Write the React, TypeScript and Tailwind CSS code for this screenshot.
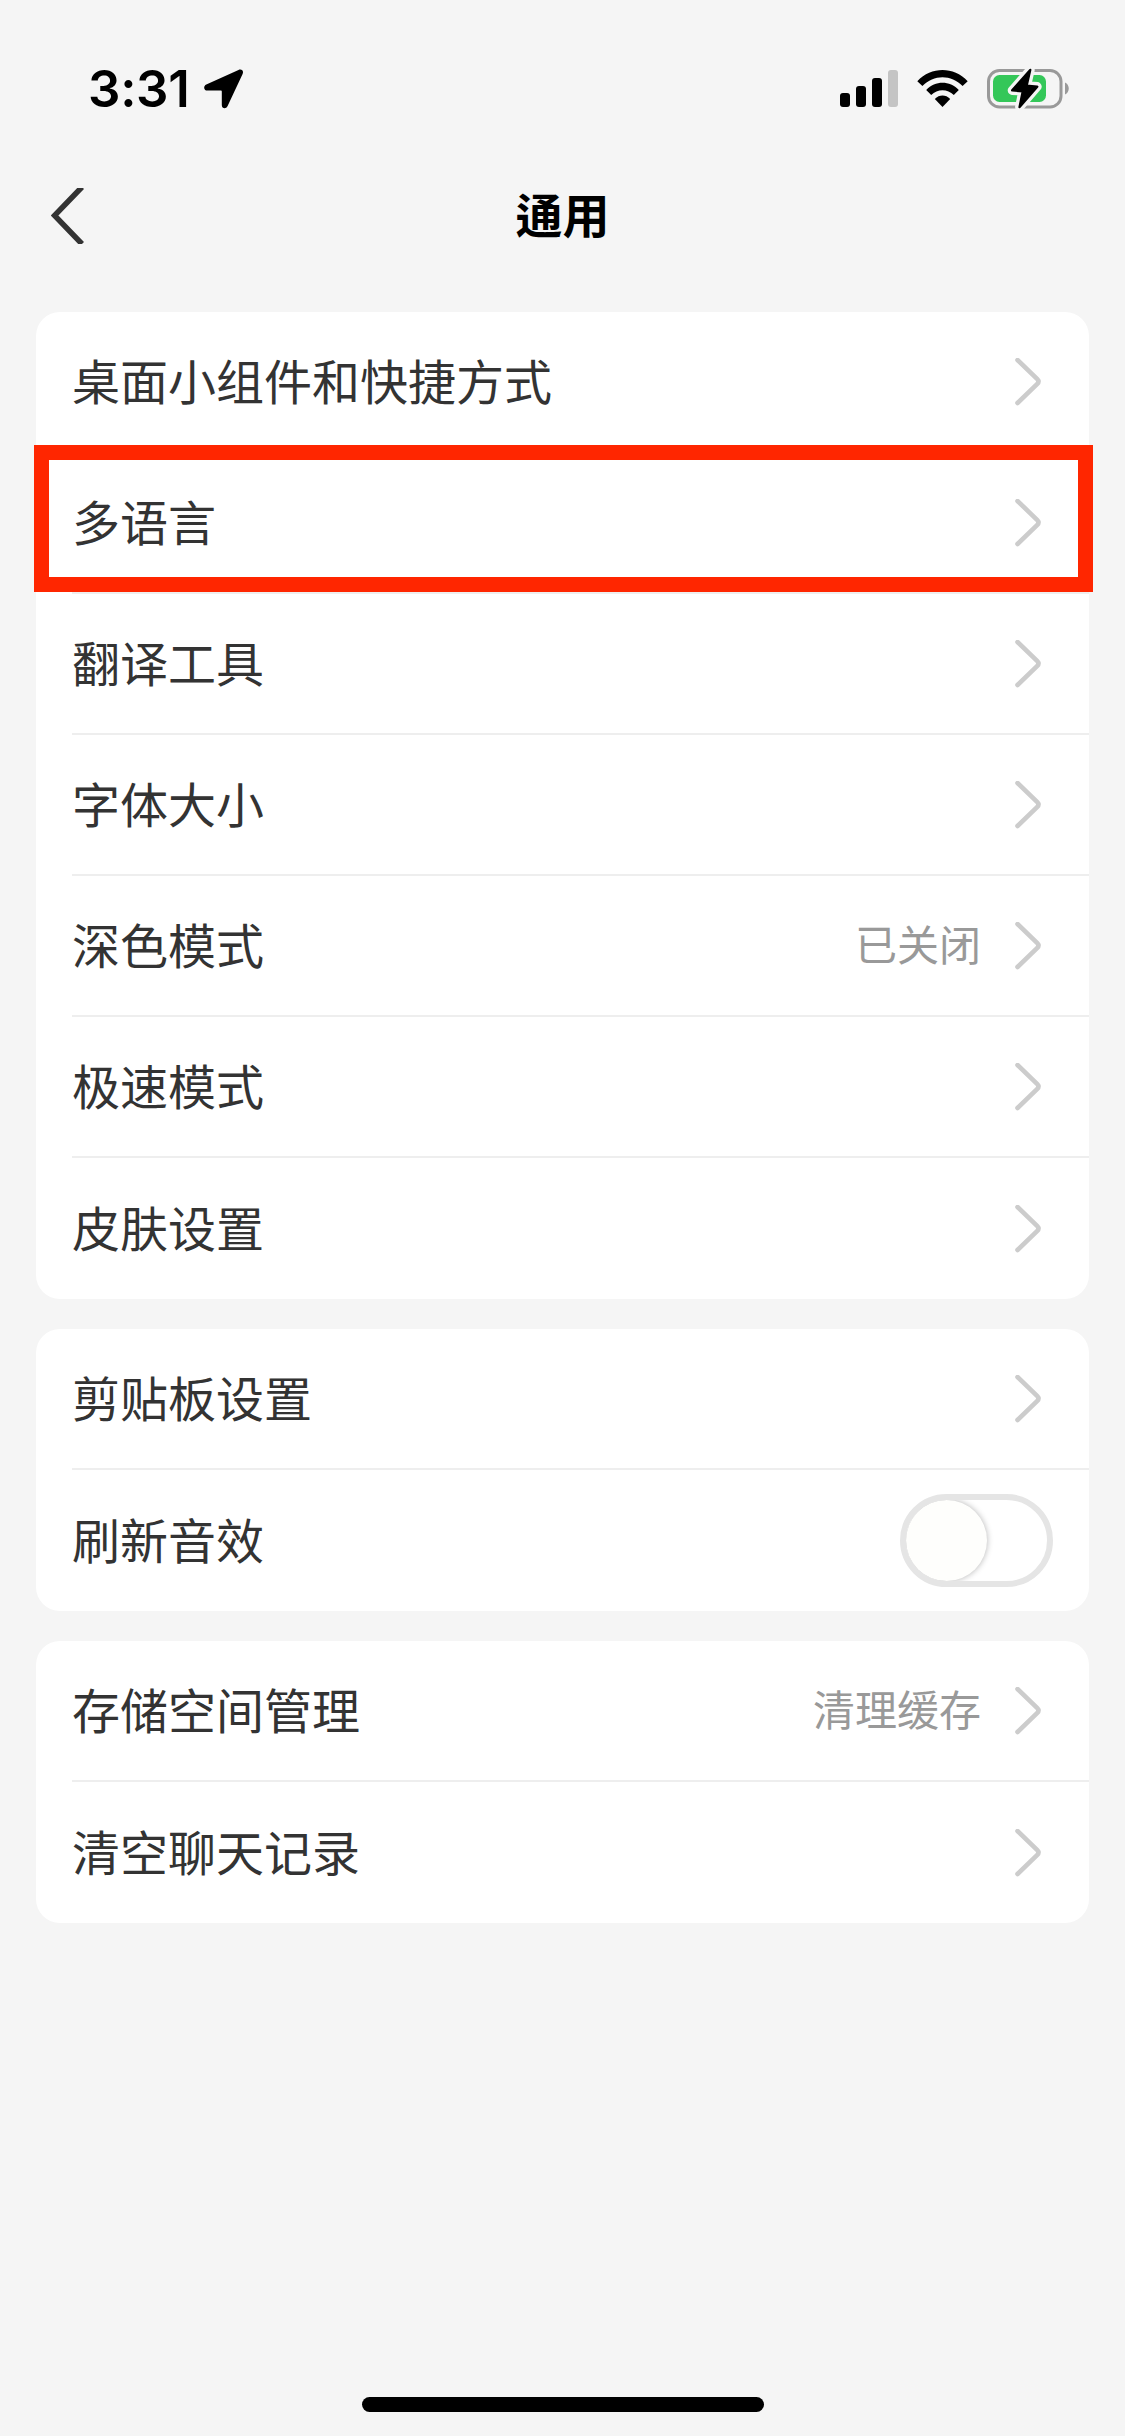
import type { ReactNode } from "react";

type Row = {
  label: string;
  value?: string;
  toggle?: boolean;
  highlighted?: boolean;
};

const groups: Row[][] = [
  [
    { label: "桌面小组件和快捷方式" },
    { label: "多语言", highlighted: true },
    { label: "翻译工具" },
    { label: "字体大小" },
    { label: "深色模式", value: "已关闭" },
    { label: "极速模式" },
    { label: "皮肤设置" },
  ],
  [{ label: "剪贴板设置" }, { label: "刷新音效", toggle: true }],
  [{ label: "存储空间管理", value: "清理缓存" }, { label: "清空聊天记录" }],
];

const LocationArrow = () => (
  <svg width="40" height="40" viewBox="0 0 40 40" className="ml-[17px]">
    <path
      d="M34.5 0.9 L2.3 15.6 C-1 17.2 -0.3 21.6 3.3 21.6 L17 21.6 Q17.8 21.6 17.8 22.4 L17.8 36 C17.8 39.8 22 40.4 23.6 37 L38.6 5 C40 1.8 37.6 -0.4 34.5 0.9 Z"
      fill="#000"
    />
  </svg>
);

const Signal = () => (
  <svg width="58" height="37" viewBox="0 0 58 37">
    <rect x="0" y="23" width="10" height="14" rx="3" />
    <rect x="16" y="16" width="10" height="21" rx="3" />
    <rect x="32" y="8" width="10" height="29" rx="3" />
    <rect x="48" y="0" width="10" height="37" rx="3" fill="#c4c4c4" />
  </svg>
);

const Wifi = () => (
  <svg width="51" height="37" viewBox="0 0 51 37">
    <path d="M0.3 11.2 C14.5 -3.7 36.5 -3.7 50.7 11.2 L45.6 16 C34.2 4.3 16.8 4.3 5.4 16 Z" />
    <path d="M9.2 20 C18.4 10.4 32.6 10.4 41.8 20 L36.8 25 C30.6 18.6 20.4 18.6 14.2 25 Z" />
    <path d="M17.8 29 C22.4 24.4 28.6 24.4 33.2 29 L25.5 37 Z" />
  </svg>
);

const bolt = "M43.2 4 L25.2 24.4 L35.8 25.2 L32.6 41 L50.2 20.6 L39.6 19.8 Z";

const Battery = () => (
  <svg width="83" height="44" viewBox="0 0 83 44">
    <rect x="1.5" y="4.5" width="72.5" height="36.5" rx="11" fill="none" stroke="#999" strokeWidth="3" />
    <rect x="6" y="9" width="53" height="27" rx="6.5" fill="#34c759" />
    <path d="M78 16.5 C83 18.5 83 26.5 78 28.5 Z" fill="#999" />
    <path d={bolt} stroke="#f5f5f5" strokeWidth="9" strokeLinejoin="round" />
    <path d={bolt} stroke="#000" strokeWidth="2.4" strokeLinejoin="round" />
  </svg>
);

const Chevron = () => (
  <svg width="26" height="48" viewBox="0 0 26 48" fill="none" className="mr-[48px]">
    <path
      d="M2.5 2 L22.3 21 Q24.6 23.5 22.3 26 L2.5 45"
      stroke="#ccc"
      strokeWidth="4.6"
      strokeLinecap="round"
    />
  </svg>
);

const Switch = () => (
  <div className="mr-9 h-[93px] w-[153px] overflow-hidden rounded-full border-[6px] border-[#e5e5e5] bg-white">
    <div className="size-[81px] rounded-full bg-[#fefefc] shadow-[0_0_6px_rgba(0,0,0,0.3)]" />
  </div>
);

const StatusBar = () => (
  <div className="flex h-[150px] items-start justify-between pr-[55px] pl-[88px]">
    <div className="flex items-center pt-[59px]">
      <span className="w-[99px] font-[Inter,sans-serif] text-[51px] leading-[60px] font-semibold tracking-[-0.3px]">
        3:31
      </span>
      <LocationArrow />
    </div>
    <div className="flex items-start gap-[19px] pt-[70px]">
      <Signal />
      <Wifi />
      <div className="-mt-1">
        <Battery />
      </div>
    </div>
  </div>
);

const Header = () => (
  <div className="grid h-[132px] grid-cols-[1fr_auto_1fr] items-center">
    <svg width="34" height="56" viewBox="0 0 34 56" fill="none" className="ml-[51px]">
      <path d="M31 -1 L3.5 27.5 L31 56" stroke="#333" strokeWidth="5.5" />
    </svg>
    <h1 className="pb-[7px] font-['Noto_Sans_CJK_KR',sans-serif] text-[47px] leading-none font-bold text-black">
      通用
    </h1>
  </div>
);

const Card = ({ children }: { children: ReactNode }) => (
  <div className="rounded-3xl bg-white pl-9">{children}</div>
);

const SettingRow = ({ row, last }: { row: Row; last: boolean }) => (
  <div
    className={`relative flex h-[141px] items-center justify-between ${last ? "" : "border-b-2 border-[#eee]"}`}
  >
    <span className="pb-[6px] text-[48px] leading-none text-[#333]">{row.label}</span>
    {row.toggle ? (
      <Switch />
    ) : (
      <div className="flex items-center gap-[34px]">
        {row.value && <span className="pb-[5px] text-[42px] leading-none text-[#999]">{row.value}</span>}
        <Chevron />
      </div>
    )}
    {/* Red frame drawn over the row */}
    {row.highlighted && (
      <div className="absolute -top-2 -right-1 -left-[38px] z-10 h-[147px] border-[15px] border-[#ff2600]" />
    )}
  </div>
);

export default function App() {
  return (
    <div className="flex h-[2436px] w-[1125px] flex-col bg-[#f5f5f5] font-['Noto_Sans_CJK_SC',sans-serif]">
      <StatusBar />
      <Header />
      <div className="flex flex-1 flex-col gap-[30px] px-9 pt-[30px]">
        {groups.map((rows, i) => (
          <Card key={i}>
            {rows.map((row, j) => (
              <SettingRow key={row.label} row={row} last={j === rows.length - 1} />
            ))}
          </Card>
        ))}
      </div>
      {/* Home indicator */}
      <div className="mb-6 h-[15px] w-[402px] self-center rounded-full bg-black" />
    </div>
  );
}
